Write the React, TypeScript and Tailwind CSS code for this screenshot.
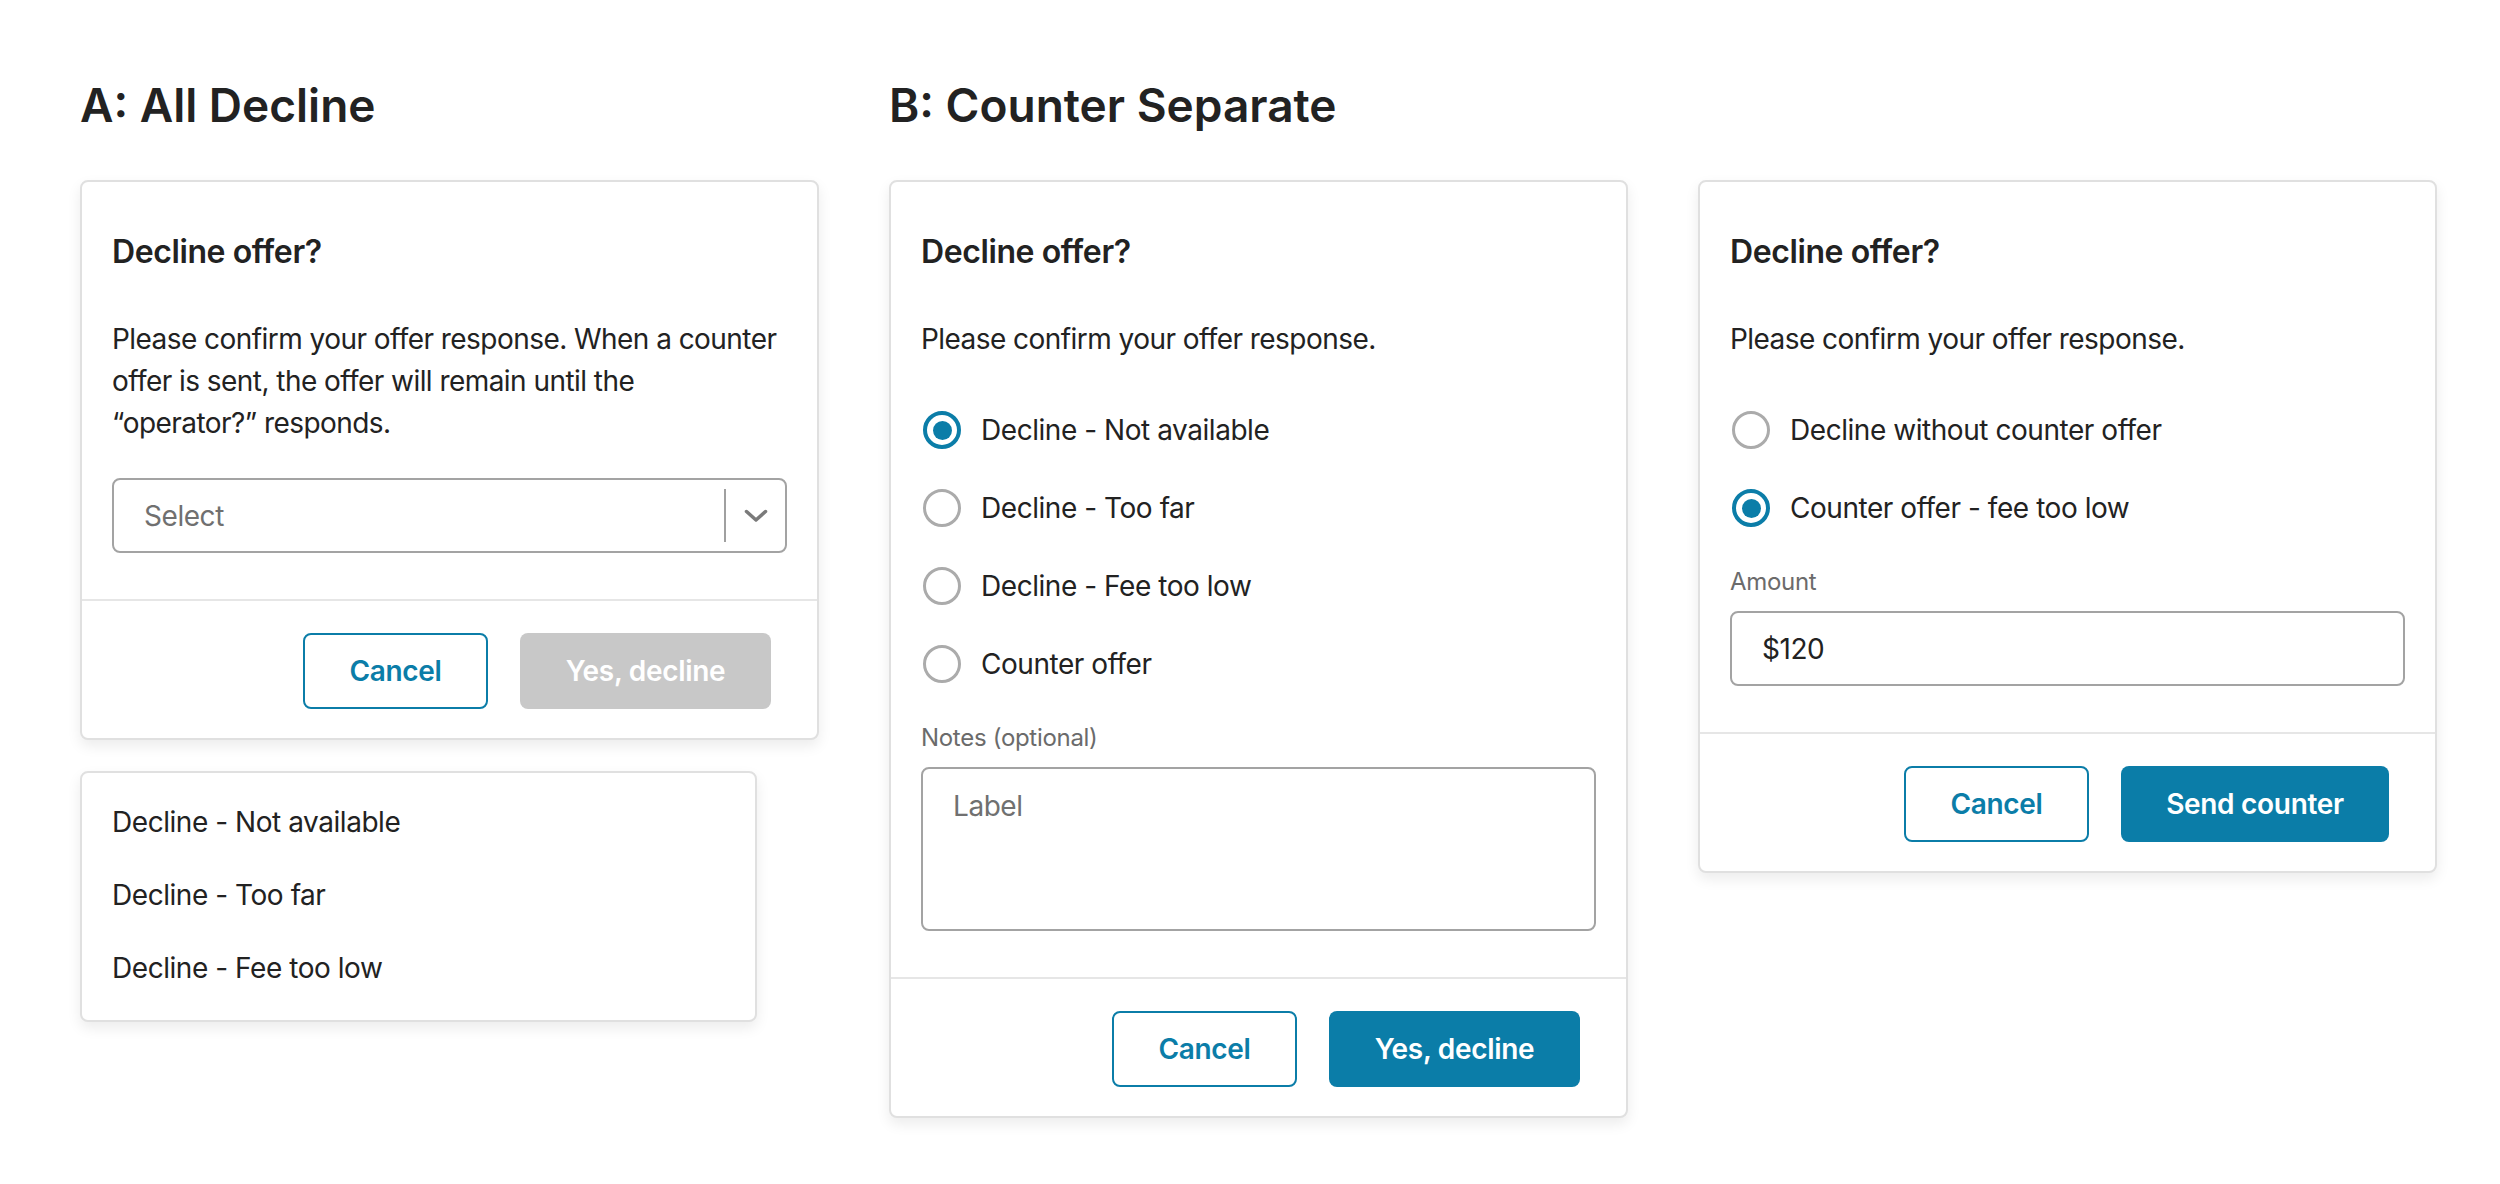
import React from 'react';

const BLUE = 'text-[#0b7da8]';

function Radio({ checked, label }: { checked?: boolean; label: string }) {
  return (
    <div className="flex h-[78px] items-center gap-[18px]">
      <div className="flex w-[42px] justify-center">
        {checked ? (
          <div className="flex h-[38px] w-[38px] items-center justify-center rounded-full border-[4px] border-[#0b7da8]">
            <div className="h-[19px] w-[19px] rounded-full bg-[#0b7da8]" />
          </div>
        ) : (
          <div className="h-[38px] w-[38px] rounded-full border-[3px] border-[#ababab]" />
        )}
      </div>
      <span className="text-[28px] leading-[42px] tracking-[-0.45px] text-[#222]">{label}</span>
    </div>
  );
}

function Footer({ primary, disabled }: { primary: string; disabled?: boolean }) {
  return (
    <div className="flex justify-end gap-[32px] border-t-2 border-[#e6e6e6] pt-[32px] pb-[29px] pr-[46px]">
      <button
        className={`h-[76px] w-[185px] rounded-[8px] border-2 border-[#0b7da8] bg-white text-[28px] font-semibold tracking-[-0.3px] ${BLUE}`}
      >
        Cancel
      </button>
      <button
        className={
          disabled
            ? 'h-[76px] w-[251px] rounded-[8px] bg-[#c8c8c8] text-[28px] font-semibold tracking-[-0.3px] text-white'
            : primary === 'Send counter'
              ? 'h-[76px] w-[268px] rounded-[8px] bg-[#0b7da8] text-[28px] font-semibold tracking-[-0.3px] text-white'
              : 'h-[76px] w-[251px] rounded-[8px] bg-[#0b7da8] text-[28px] font-semibold tracking-[-0.3px] text-white'
        }
      >
        {primary}
      </button>
    </div>
  );
}

function Card({ children }: { children: React.ReactNode }) {
  return (
    <div className="w-[739px] rounded-[8px] border-2 border-[#e0e0e0] bg-white shadow-[0_6px_14px_rgba(0,0,0,0.08)]">
      {children}
    </div>
  );
}

function CardTitle() {
  return (
    <h2 className="text-[32px] font-semibold leading-[48px] tracking-[-0.4px] text-[#222]">Decline offer?</h2>
  );
}

export default function App() {
  return (
    <div className="h-[1184px] w-[2500px] bg-white font-['Inter',sans-serif] text-[#222]">
      <div className="flex gap-[70px] pl-[80px] pt-[77px]">
        {/* A: all decline */}
        <div className="w-[739px]">
          <h1 className="mb-[47px] text-[46px] font-semibold leading-[56px]">A: All Decline</h1>
          <Card>
            <div className="px-[30px] pt-[46px] pb-[46px]">
              <CardTitle />
              <p className="mt-[42px] text-[28px] leading-[42px] tracking-[-0.55px]">
                Please confirm your offer response. When a counter offer is sent, the offer will remain until the
                <br />
                “operator?” responds.
              </p>
              <div className="mt-[34px] flex h-[75px] items-center rounded-[8px] border-2 border-[#a3a3a3]">
                <span className="flex-1 pl-[30px] text-[28px] tracking-[-0.45px] text-[#707070]">Select</span>
                <div className="h-[53px] w-[2px] bg-[#a0a0a0]" />
                <div className="flex w-[59px] justify-center">
                  <svg width="24" height="14" viewBox="0 0 24 14" fill="none">
                    <polyline points="2.5,2.5 12,11 21.5,2.5" stroke="#7a7a7a" strokeWidth="3.5" strokeLinecap="round" strokeLinejoin="round" />
                  </svg>
                </div>
              </div>
            </div>
            <Footer primary="Yes, decline" disabled />
          </Card>

          <div className="mt-[31px] w-[677px] rounded-[8px] border-2 border-[#e0e0e0] bg-white pt-[12px] pb-[16px] shadow-[0_6px_14px_rgba(0,0,0,0.08)]">
            {['Decline - Not available', 'Decline - Too far', 'Decline - Fee too low'].map((item) => (
              <div key={item} className="flex h-[73px] items-center px-[30px] text-[28px] leading-[42px] tracking-[-0.45px]">
                {item}
              </div>
            ))}
          </div>
        </div>

        {/* B: counter separate */}
        <div>
          <h1 className="mb-[47px] text-[46px] font-semibold leading-[56px]">B: Counter Separate</h1>
          <div className="flex items-start gap-[70px]">
            <Card>
              <div className="px-[30px] pt-[46px] pb-[46px]">
                <CardTitle />
                <p className="mt-[42px] text-[28px] leading-[42px] tracking-[-0.55px]">Please confirm your offer response.</p>
                <div className="mt-[31px]">
                  <Radio checked label="Decline - Not available" />
                  <Radio label="Decline - Too far" />
                  <Radio label="Decline - Fee too low" />
                  <Radio label="Counter offer" />
                </div>
                <div className="mt-[19px] text-[24px] leading-[32px] tracking-[-0.3px] text-[#6b6b6b]">Notes (optional)</div>
                <div className="mt-[13px] h-[164px] rounded-[8px] border-2 border-[#a3a3a3] pl-[30px] pt-[16px]">
                  <span className="text-[28px] leading-[42px] tracking-[-0.45px] text-[#707070]">Label</span>
                </div>
              </div>
              <Footer primary="Yes, decline" />
            </Card>

            <Card>
              <div className="px-[30px] pt-[46px] pb-[46px]">
                <CardTitle />
                <p className="mt-[42px] text-[28px] leading-[42px] tracking-[-0.55px]">Please confirm your offer response.</p>
                <div className="mt-[31px]">
                  <Radio label="Decline without counter offer" />
                  <Radio checked label="Counter offer - fee too low" />
                </div>
                <div className="mt-[19px] text-[24px] leading-[32px] tracking-[-0.3px] text-[#6b6b6b]">Amount</div>
                <div className="mt-[13px] flex h-[75px] items-center rounded-[8px] border-2 border-[#a3a3a3] pl-[30px]">
                  <span className="text-[28px] leading-[42px] tracking-[-0.45px] text-[#222]">$120</span>
                </div>
              </div>
              <Footer primary="Send counter" />
            </Card>
          </div>
        </div>
      </div>
    </div>
  );
}
